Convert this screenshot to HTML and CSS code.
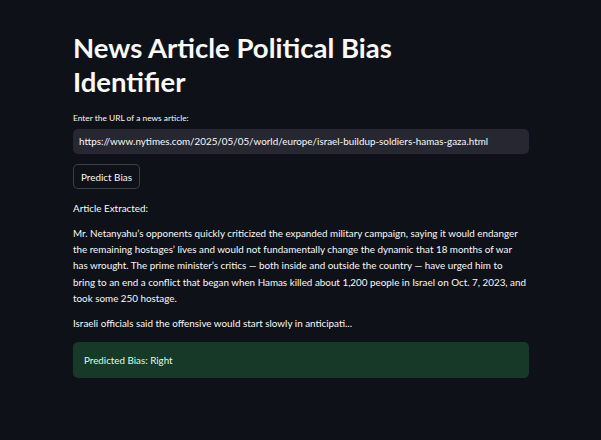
FILE: index.html
```html
<!DOCTYPE html>
<html>
<head>
<meta charset="utf-8">
<link rel="stylesheet" href="styles.css">
</head>
<body>
<main class="app">
  <h1 class="title">News Article Political Bias Identifier</h1>
  <label class="label" for="url">Enter the URL of a news article:</label>
  <div class="input" id="url">https://www.nytimes.com/2025/05/05/world/europe/israel-buildup-soldiers-hamas-gaza.html</div>
  <div class="btn-row"><button class="btn">Predict Bias</button></div>
  <p class="text">Article Extracted:</p>
  <p class="text">Mr. Netanyahu’s opponents quickly criticized the expanded military campaign, saying it would endanger the remaining hostages’ lives and would not fundamentally change the dynamic that 18 months of war<br>has wrought. The prime minister’s critics — both inside and outside the country — have urged him to<br>bring to an end a conflict that began when Hamas killed about 1,200 people in Israel on Oct. 7, 2023, and took some 250 hostage.</p>
  <p class="text">Israeli officials said the offensive would start slowly in anticipati...</p>
  <div class="success">Predicted Bias: Right</div>
</main>
</body>
</html>
```
FILE: styles.css
```css
html, body {
  margin: 0;
  padding: 0;
  background: #0e1117;
  color: #fafafa;
  font-family: Lato, "Noto Sans", sans-serif;
}
.app {
  width: 456px;
  margin: 0 0 0 73px;
  padding-top: 31px;
  display: flex;
  flex-direction: column;
}
.title {
  margin: 0;
  max-width: 360px;
  font-size: 27.5px;
  line-height: 34px;
  font-weight: 700;
}
.label {
  margin-top: 13px;
  font-size: 8.4px;
  line-height: 12px;
}
.input {
  margin-top: 5px;
  height: 25px;
  line-height: 25px;
  background: #262730;
  border-radius: 5px;
  padding: 0 6px;
  font-size: 9.85px;
  white-space: nowrap;
  overflow: hidden;
}
.btn-row { margin-top: 10px; display: flex; }
.btn {
  height: 25px;
  padding: 0 7px;
  background: #0e1117;
  color: #fafafa;
  border: 1px solid rgba(250,250,250,0.2);
  border-radius: 5px;
  font-family: inherit;
  font-size: 9.9px;
}
.text {
  margin: 0;
  font-size: 9.85px;
  line-height: 16.3px;
}
.text + .text { margin-top: 8.6px; }
.btn-row + .text { margin-top: 11px; }
.success {
  margin-top: 11px;
  height: 36px;
  line-height: 36px;
  padding: 0 11px;
  background: #173928;
  color: #dffde9;
  border-radius: 5px;
  font-size: 9.8px;
}
```
